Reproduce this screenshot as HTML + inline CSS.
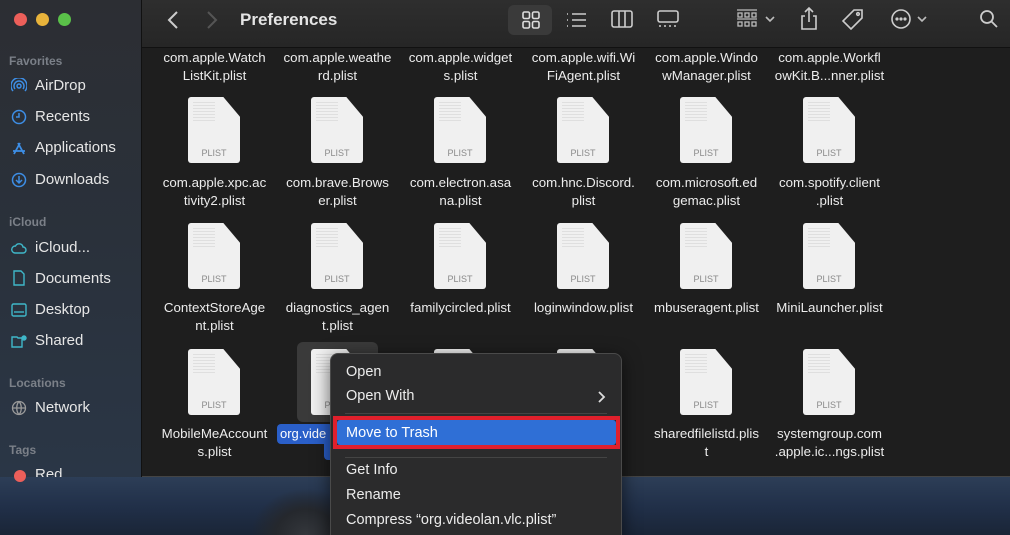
<!DOCTYPE html>
<html><head><meta charset="utf-8"><style>
*{margin:0;padding:0;box-sizing:border-box}
html,body{width:1010px;height:535px;overflow:hidden}
body{font-family:"Liberation Sans",sans-serif;background:#1b2636;position:relative}
.desk{position:absolute;left:0;top:477px;width:1010px;height:58px;background:linear-gradient(180deg,#2d3e57 0%,#213049 50%,#1a2537 100%)}
.rock{position:absolute;top:477px;left:240px;width:110px;height:58px;background:radial-gradient(ellipse 50% 80% at 60% 100%,#34373c 0%,#25282d 55%,rgba(37,40,45,0) 100%)}
.side{position:absolute;left:0;top:0;width:142px;height:477px;background:linear-gradient(180deg,#2c2e33 0%,#2a313b 50%,#2a3646 100%);border-right:1px solid #111}
.main{position:absolute;left:142px;top:0;width:868px;height:477px;background:#1e1e1e;border-bottom:1px solid #444}
.tb{position:absolute;left:0;top:0;width:868px;height:48px;background:linear-gradient(180deg,#2e2e2e,#262626);border-bottom:1px solid #111}
.dot{position:absolute;top:13px;width:13px;height:13px;border-radius:50%}
.sh{position:absolute;left:9px;font-size:12px;color:#7b8088;font-weight:bold}
.si{position:absolute;left:35px;font-size:15px;color:#e6e6e6}
.ic{position:absolute;left:11px;width:16px;height:16px}
.lbl{position:absolute;width:123px;text-align:center;font-size:13.3px;line-height:18px;color:#ececec}
.file{position:absolute;width:52px;height:66px;background:#f0f0f0;clip-path:polygon(0 0,68% 0,100% 30%,100% 100%,0 100%);border-radius:3px}
.file:after{content:"PLIST";position:absolute;bottom:5px;width:100%;text-align:center;font-size:9px;color:#8a8a8a}
.file i{position:absolute;left:5px;top:5px;width:22px;height:20px;background:repeating-linear-gradient(180deg,#d4d4d4 0 1px,transparent 1px 3px);opacity:.6}
.menu{position:absolute;left:330px;top:353px;width:292px;height:190px;background:#2b2b2c;border:1px solid #4a4a4a;border-radius:8px;box-shadow:0 4px 18px rgba(0,0,0,.6)}
.mi{position:absolute;left:15px;font-size:14.5px;color:#ececec}
.sep{position:absolute;left:14px;right:14px;height:1px;background:#444}
</style></head><body>
<div class="desk"></div><div class="rock"></div>
<div class="side">
<div class="dot" style="left:14px;background:#ec5f5a"></div>
<div class="dot" style="left:36px;background:#e8b33b"></div>
<div class="dot" style="left:58px;background:#5ac149"></div>
<div class="sh" style="top:54px">Favorites</div>
<svg class="ic" style="top:78px" viewBox="0 0 16 16" fill="none" stroke="#3d8ee6" stroke-width="1.5"><circle cx="8" cy="8" r="2"/><path d="M4 11a5 5 0 1 1 8 0M2 13a8 8 0 1 1 12 0"/></svg>
<div class="si" style="top:77px">AirDrop</div>
<svg class="ic" style="top:109px" viewBox="0 0 16 16" fill="none" stroke="#3d8ee6" stroke-width="1.5"><circle cx="8" cy="8" r="6.5"/><path d="M8 4v4H5"/></svg>
<div class="si" style="top:108px">Recents</div>
<svg class="ic" style="top:140px" viewBox="0 0 16 16" fill="none" stroke="#3d8ee6" stroke-width="1.8"><path d="M3 14L9 3M13 14L7 3M2 11h12"/></svg>
<div class="si" style="top:139px">Applications</div>
<svg class="ic" style="top:172px" viewBox="0 0 16 16" fill="none" stroke="#3d8ee6" stroke-width="1.5"><circle cx="8" cy="8" r="6.5"/><path d="M8 4v7M5 8l3 3 3-3"/></svg>
<div class="si" style="top:171px">Downloads</div>
<div class="sh" style="top:215px">iCloud</div>
<svg class="ic" style="top:240px" viewBox="0 0 16 16" fill="none" stroke="#3fb7c9" stroke-width="1.4"><path d="M4 13h8a3 3 0 0 0 0-6 4 4 0 0 0-7.5-1A3.5 3.5 0 0 0 4 13z"/></svg>
<div class="si" style="top:239px">iCloud...</div>
<svg class="ic" style="top:270px" viewBox="0 0 16 16" fill="none" stroke="#3fb7c9" stroke-width="1.4"><path d="M3 1h7l3 3v11H3z"/></svg>
<div class="si" style="top:270px">Documents</div>
<svg class="ic" style="top:302px" viewBox="0 0 16 16" fill="none" stroke="#3fb7c9" stroke-width="1.4"><rect x="1" y="2" width="14" height="12" rx="1.5"/><path d="M3 10h10"/></svg>
<div class="si" style="top:301px">Desktop</div>
<svg class="ic" style="top:333px" viewBox="0 0 16 16" fill="none" stroke="#3fb7c9" stroke-width="1.4"><path d="M1 4h5l1 1h4v9H1z"/><circle cx="13" cy="5" r="2" fill="#3fb7c9"/></svg>
<div class="si" style="top:332px">Shared</div>
<div class="sh" style="top:376px">Locations</div>
<svg class="ic" style="top:400px" viewBox="0 0 16 16" fill="none" stroke="#9a9a9a" stroke-width="1.3"><circle cx="8" cy="8" r="6.5"/><path d="M1.5 8h13M8 1.5c-3 3-3 10 0 13M8 1.5c3 3 3 10 0 13"/></svg>
<div class="si" style="top:399px">Network</div>
<div class="sh" style="top:443px">Tags</div>
<div style="position:absolute;left:14px;top:470px;width:12px;height:12px;border-radius:50%;background:#ec5f5a"></div>
<div class="si" style="top:466px;height:11px;overflow:hidden;line-height:18px">Red</div>
</div>
<div class="main">
<div class="tb">
<svg style="position:absolute;left:24px;top:10px" width="14" height="20" viewBox="0 0 14 20" fill="none" stroke="#ccc" stroke-width="2"><path d="M11 2L3 10l8 8"/></svg>
<svg style="position:absolute;left:63px;top:10px" width="14" height="20" viewBox="0 0 14 20" fill="none" stroke="#555" stroke-width="2"><path d="M3 2l8 8-8 8"/></svg>
<div style="position:absolute;left:98px;top:10px;font-size:17px;font-weight:bold;color:#e4e4e4">Preferences</div>
<div style="position:absolute;left:366px;top:5px;width:44px;height:30px;border-radius:6px;background:#3a3a3a"></div>
<svg style="position:absolute;left:379px;top:10px" width="20" height="20" viewBox="0 0 20 20" fill="none" stroke="#ddd" stroke-width="1.6"><rect x="2" y="2" width="6.5" height="6.5" rx="1.5"/><rect x="11.5" y="2" width="6.5" height="6.5" rx="1.5"/><rect x="2" y="11.5" width="6.5" height="6.5" rx="1.5"/><rect x="11.5" y="11.5" width="6.5" height="6.5" rx="1.5"/></svg>
<svg style="position:absolute;left:423px;top:10px" width="22" height="20" viewBox="0 0 22 20" fill="none" stroke="#ccc" stroke-width="1.6"><path d="M7 4h14M7 10h14M7 16h14M2 4h1M2 10h1M2 16h1"/></svg>
<svg style="position:absolute;left:469px;top:9px" width="22" height="20" viewBox="0 0 22 20" fill="none" stroke="#ccc" stroke-width="1.6"><rect x="1" y="2" width="20" height="16" rx="2"/><path d="M8 2v16M14 2v16"/></svg>
<svg style="position:absolute;left:514px;top:9px" width="24" height="20" viewBox="0 0 24 20" fill="none" stroke="#ccc" stroke-width="1.6"><rect x="2" y="2" width="20" height="11" rx="2"/><path d="M3 17h2M8 17h2M13 17h2M18 17h2"/></svg>
<svg style="position:absolute;left:594px;top:9px" width="22" height="20" viewBox="0 0 22 20" fill="none" stroke="#bbb" stroke-width="1.3"><path d="M1 1h20M1 10h20"/><rect x="2" y="4" width="4" height="4"/><rect x="9" y="4" width="4" height="4"/><rect x="16" y="4" width="4" height="4"/><rect x="2" y="13" width="4" height="4"/><rect x="9" y="13" width="4" height="4"/><rect x="16" y="13" width="4" height="4"/></svg>
<svg style="position:absolute;left:622px;top:14px" width="12" height="10" viewBox="0 0 12 10" fill="none" stroke="#bbb" stroke-width="1.6"><path d="M2 3l4 4 4-4"/></svg>
<svg style="position:absolute;left:657px;top:6px" width="20" height="26" viewBox="0 0 20 26" fill="none" stroke="#ccc" stroke-width="1.6"><path d="M10 2v14M6 6l4-4 4 4M6 10H3v13h14V10h-3"/></svg>
<svg style="position:absolute;left:698px;top:7px" width="26" height="26" viewBox="0 0 26 26" fill="none" stroke="#ccc" stroke-width="1.6"><path d="M14 3h8v8L11 22 3 14z"/><circle cx="18" cy="7" r="1.3"/></svg>
<svg style="position:absolute;left:748px;top:8px" width="22" height="22" viewBox="0 0 22 22" fill="none" stroke="#ccc" stroke-width="1.6"><circle cx="11" cy="11" r="9"/><circle cx="7" cy="11" r=".8" fill="#ccc"/><circle cx="11" cy="11" r=".8" fill="#ccc"/><circle cx="15" cy="11" r=".8" fill="#ccc"/></svg>
<svg style="position:absolute;left:774px;top:14px" width="12" height="10" viewBox="0 0 12 10" fill="none" stroke="#bbb" stroke-width="1.6"><path d="M2 3l4 4 4-4"/></svg>
<svg style="position:absolute;left:837px;top:9px" width="20" height="20" viewBox="0 0 20 20" fill="none" stroke="#ccc" stroke-width="1.8"><circle cx="8" cy="8" r="6"/><path d="M12.5 12.5L18 18"/></svg>
</div>
</div>
<div id="g"></div>
<div style="position:absolute;left:297px;top:342px;width:81px;height:80px;border-radius:6px;background:#3a3a3a"></div>
<script>
var X=[214,337,460,583,706,829];
var L0=[["com.apple.Watch","ListKit.plist"],["com.apple.weathe","rd.plist"],["com.apple.widget","s.plist"],["com.apple.wifi.Wi","FiAgent.plist"],["com.apple.Windo","wManager.plist"],["com.apple.Workfl","owKit.B...nner.plist"]];
var L1=[["com.apple.xpc.ac","tivity2.plist"],["com.brave.Brows","er.plist"],["com.electron.asa","na.plist"],["com.hnc.Discord.","plist"],["com.microsoft.ed","gemac.plist"],["com.spotify.client",".plist"]];
var L2=[["ContextStoreAge","nt.plist"],["diagnostics_agen","t.plist"],["familycircled.plist",""],["loginwindow.plist",""],["mbuseragent.plist",""],["MiniLauncher.plist",""]];
var L3=[["MobileMeAccount","s.plist"],null,null,null,["sharedfilelistd.plis","t"],["systemgroup.com",".apple.ic...ngs.plist"]];
var h="";
function lab(c,t,y){h+='<div class="lbl" style="left:'+(X[c]-61)+'px;top:'+y+'px">'+t[0]+'<br>'+t[1]+'</div>';}
function ico(c,y){h+='<div class="file" style="left:'+(X[c]-26)+'px;top:'+y+'px"><i></i></div>';}
for(var c=0;c<6;c++){lab(c,L0[c],49);ico(c,97);lab(c,L1[c],174);ico(c,223);lab(c,L2[c],299);if(c!=1)ico(c,349);if(L3[c])lab(c,L3[c],425);}
document.getElementById("g").innerHTML=h;
</script>
<div class="file" style="left:311px;top:349px"><i></i></div>
<div style="position:absolute;left:277px;top:424px;width:56px;height:20px;background:#2a5fc9;border-radius:4px;color:#fff;font-size:13px;line-height:20px;padding-left:3px">org.vide</div>
<div style="position:absolute;left:324px;top:443px;width:8px;height:17px;background:#2a5fc9;border-radius:0 0 0 4px"></div>
<div class="menu">
<div class="mi" style="top:10px">Open</div>
<div class="mi" style="top:34px">Open With</div>
<svg style="position:absolute;left:265px;top:36px" width="10" height="14" viewBox="0 0 10 14" fill="none" stroke="#ddd" stroke-width="1.8"><path d="M3 2l5 5-5 5"/></svg>
<div class="sep" style="top:59px"></div>
<div style="position:absolute;left:2px;top:62px;width:287px;height:33px;border:4px solid #e0202c"></div>
<div style="position:absolute;left:6px;top:66px;width:279px;height:25px;background:#2f6fd6;border-radius:3px"></div>
<div class="mi" style="top:71px;color:#fff">Move to Trash</div>
<div class="sep" style="top:103px"></div>
<div class="mi" style="top:108px">Get Info</div>
<div class="mi" style="top:133px">Rename</div>
<div class="mi" style="top:158px">Compress “org.videolan.vlc.plist”</div>
</div>
</body></html>
